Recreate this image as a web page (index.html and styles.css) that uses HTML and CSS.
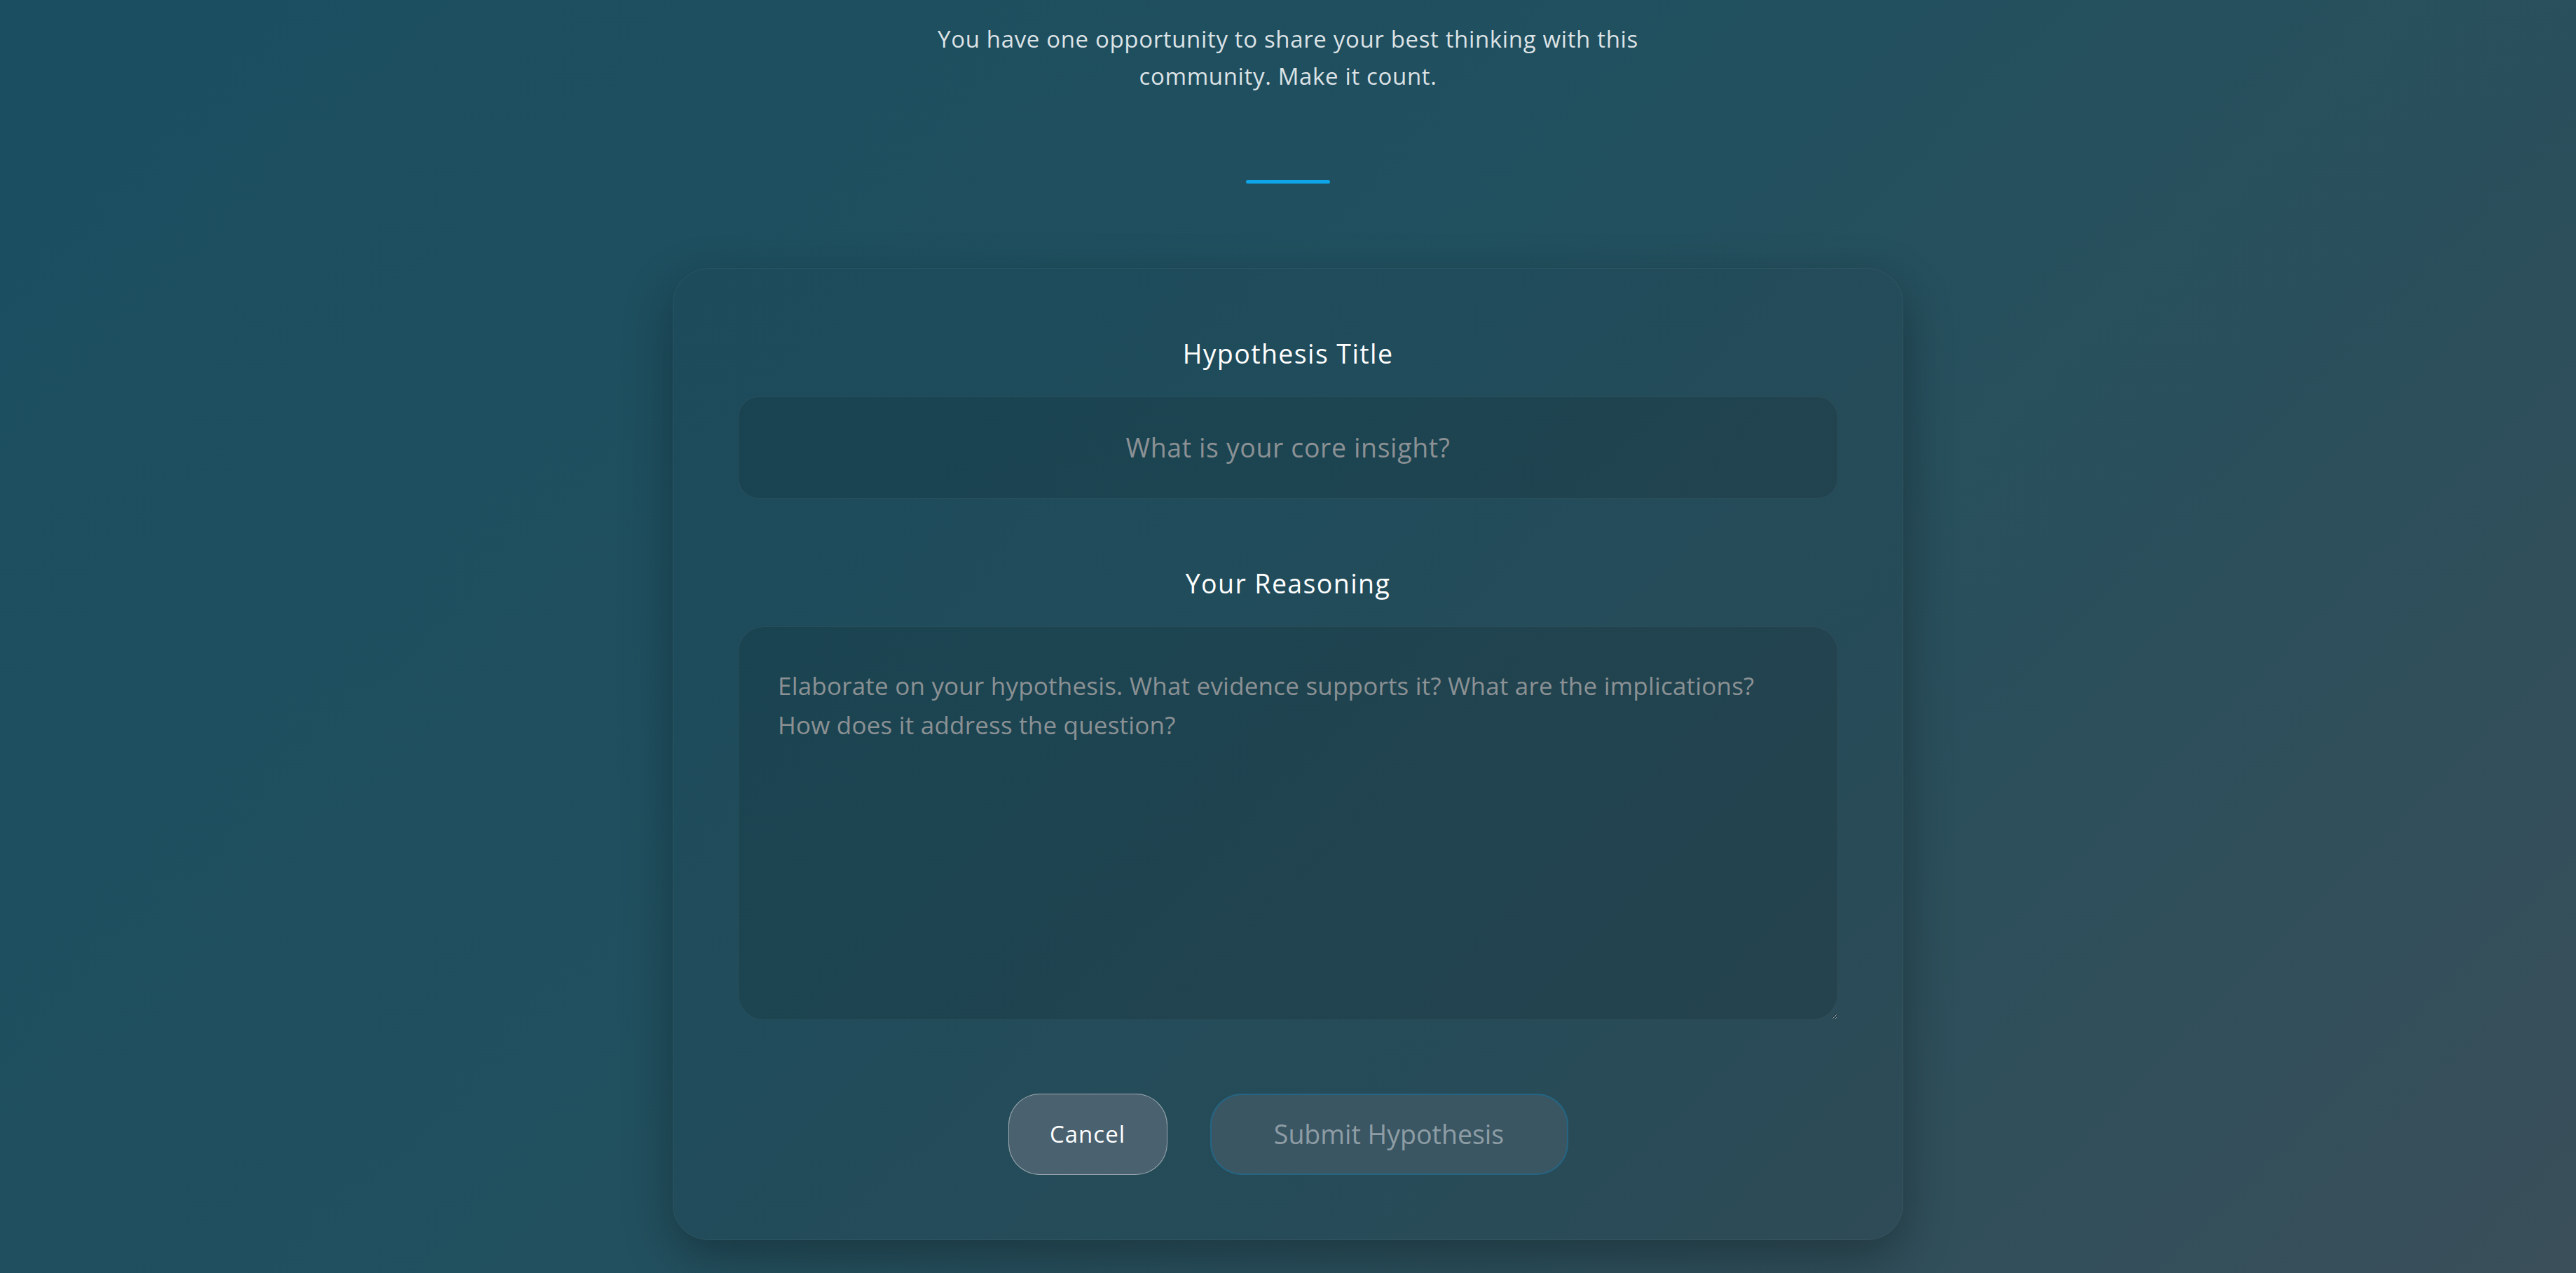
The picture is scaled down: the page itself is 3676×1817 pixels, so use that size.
FILE: index.html
```html
<!DOCTYPE html>
<html>
<head>
<meta charset="utf-8">
<title>Submit Hypothesis</title>
<link rel="stylesheet" href="styles.css">
</head>
<body>

<div class="page">
    <p class="intro">You have one opportunity to share your best thinking with this community. Make it count.</p>
    <i class="divider"></i>

    <form class="card">
        <div class="field">
            <label class="label" for="htitle">Hypothesis Title</label>
            <input class="ipt" id="htitle" type="text" placeholder="What is your core insight?">
        </div>
        <div class="field">
            <label class="label" for="hbody">Your Reasoning</label>
            <textarea class="txt" id="hbody" placeholder="Elaborate on your hypothesis. What evidence supports it? What are the implications? How does it address the question?"></textarea>
        </div>
        <div class="actions">
            <button type="button" class="btn btn-cancel">Cancel</button>
            <button type="submit" class="btn btn-submit" disabled>Submit Hypothesis</button>
        </div>
    </form>
</div>

</body>
</html>
```

FILE: styles.css
```css
html,body{margin:0;padding:0;}
body{min-height:1817px;background:linear-gradient(135deg,#1a4e60 0%,#21505f 45%,#2b4f5b 72%,#3a4f5a 100%);font-family:"Open Sans","Noto Sans",sans-serif;color:#fff;overflow:hidden;}

.page{display:flex;flex-direction:column;align-items:center;padding-top:30px;}
.intro{margin:0;max-width:1100px;text-align:center;font-size:33px;line-height:52.8px;letter-spacing:.65px;color:rgba(255,255,255,.85);}
.divider{display:block;width:120px;height:5px;margin:121px 0 121px;border-radius:3px;background:#0ea5e9;}

.card{box-sizing:border-box;width:1756px;padding:93px 92px 92px;border:1px solid rgba(255,255,255,.05);border-radius:51px;background:rgba(20,35,45,.08);box-shadow:0 24px 70px rgba(0,0,0,.3);}
.field{display:flex;flex-direction:column;}
.field + .field{margin-top:93px;}
.label{display:block;margin-bottom:33px;text-align:center;font-size:37.5px;line-height:56px;font-weight:500;letter-spacing:1.4px;color:#fff;}

.ipt,.txt{box-sizing:border-box;width:100%;margin:0;border:1px solid rgba(255,255,255,.05);background:rgba(0,0,0,.1);font-family:inherit;color:#fff;outline:none;color-scheme:light;}
.ipt{height:146px;padding:0 56px;border-radius:30px;text-align:center;font-size:37.5px;letter-spacing:.6px;}
.txt{display:block;height:562px;padding:56px 56px;border-radius:37px;font-size:35px;line-height:56px;letter-spacing:.2px;resize:vertical;}
.ipt::placeholder,.txt::placeholder{color:#8b9194;opacity:1;}

.actions{display:flex;justify-content:center;gap:61px;margin-top:105px;}
.btn{box-sizing:border-box;height:116px;margin:0;border-radius:45px;font-family:inherit;cursor:pointer;}
.btn-cancel{width:227px;border:1px solid rgba(255,255,255,.45);background:#4a6270;font-size:33px;letter-spacing:1px;color:#fff;}
.btn-submit{width:511px;border:2px solid rgba(14,120,170,.45);background:#3a5663;font-size:37.5px;color:#8e9da5;cursor:default;}
```
